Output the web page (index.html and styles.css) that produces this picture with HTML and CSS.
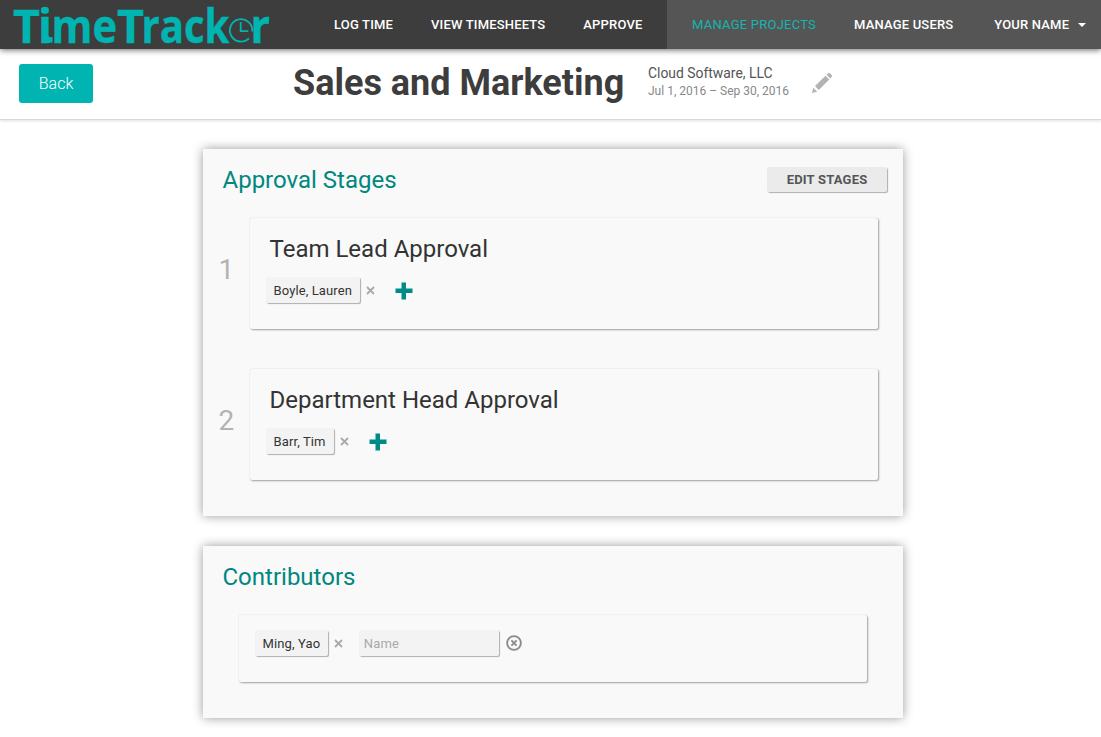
FILE: index.html
```html
<!DOCTYPE html>
<html lang="en">
<head>
<meta charset="utf-8">
<title>TimeTracker</title>
<link rel="stylesheet" href="styles.css">
</head>
<body>
<header class="navbar">
  <a class="logo" aria-label="TimeTracker">
    <svg width="290" height="49" viewBox="0 0 290 49">
      <g class="logo-text">
        <text x="13" y="42.7" textLength="27" lengthAdjust="spacingAndGlyphs">T</text>
        <text x="38" y="42.7" textLength="14" lengthAdjust="spacingAndGlyphs">i</text>
        <text x="51.5" y="42.7" textLength="65.500" lengthAdjust="spacingAndGlyphs">me</text>
        <text x="117" y="42.7" textLength="27" lengthAdjust="spacingAndGlyphs">T</text>
        <text x="141.5" y="42.7" textLength="88" lengthAdjust="spacingAndGlyphs">rack</text>
        <text x="250.5" y="42.7" textLength="19.500" lengthAdjust="spacingAndGlyphs">r</text>
      </g>
      <path class="logo-foot" d="M47 33q1 5 5.500 4v5.500q-4 .8-8 .2z"/>
      <path class="logo-clock" d="M240.700 22v9.200h7.600M249 38.300A11.200 11.200 0 1 1 252.200 31.500"/>
    </svg>
  </a>
  <nav class="nav">
    <a class="nav-link">LOG TIME</a>
    <a class="nav-link">VIEW TIMESHEETS</a>
    <a class="nav-link">APPROVE</a>
  </nav>
  <nav class="nav nav-admin">
    <a class="nav-link active">MANAGE PROJECTS</a>
    <a class="nav-link">MANAGE USERS</a>
    <a class="nav-link user">YOUR NAME<span class="caret"></span></a>
  </nav>
</header>
<section class="project-bar">
  <button class="back">Back</button>
  <h1>Sales and Marketing</h1>
  <div class="meta">
    <div class="client">Cloud Software, LLC</div>
    <div class="dates">Jul 1, 2016 – Sep 30, 2016</div>
  </div>
  <svg class="pencil" width="22" height="22" viewBox="0 0 22 22"><path d="M1 21l1.200-5.200 4 4zM4 14L14.500 3.800l3.800 3.700L7.800 18zM15.600 2.700L17.200 1.200q.8-.7 1.600 0l2 2q.8.800 0 1.600l-1.500 1.600z"/></svg>
</section>
<main>
  <section class="panel">
    <div class="panel-head">
      <h2>Approval Stages</h2>
      <button class="edit">EDIT STAGES</button>
    </div>
    <div class="stage">
      <span class="number">1</span>
      <div class="card">
        <h3>Team Lead Approval</h3>
        <div class="people">
          <span class="chip">Boyle, Lauren</span>
          <svg class="remove" width="9" height="9" viewBox="0 0 9 9"><path d="M1 1l7 7M8 1L1 8"/></svg>
          <svg class="add" width="18" height="18" viewBox="0 0 18 18"><path d="M6.500 .5h4.500V6.500h6.500v4.500H11v6.500H6.500V11H.5V6.500h6z"/></svg>
        </div>
      </div>
    </div>
    <div class="stage">
      <span class="number">2</span>
      <div class="card">
        <h3>Department Head Approval</h3>
        <div class="people">
          <span class="chip">Barr, Tim</span>
          <svg class="remove" width="9" height="9" viewBox="0 0 9 9"><path d="M1 1l7 7M8 1L1 8"/></svg>
          <svg class="add" width="18" height="18" viewBox="0 0 18 18"><path d="M6.500 .5h4.500V6.500h6.500v4.500H11v6.500H6.500V11H.5V6.500h6z"/></svg>
        </div>
      </div>
    </div>
  </section>
  <section class="panel">
    <div class="panel-head">
      <h2>Contributors</h2>
    </div>
    <div class="card contributors">
      <div class="people">
        <span class="chip">Ming, Yao</span>
        <svg class="remove" width="9" height="9" viewBox="0 0 9 9"><path d="M1 1l7 7M8 1L1 8"/></svg>
        <input class="name-input" type="text" placeholder="Name">
        <svg class="cancel" width="16" height="16" viewBox="0 0 16 16"><circle cx="8" cy="8" r="6.900"/><path d="M5.400 5.400l5.200 5.200M10.600 5.400l-5.200 5.200"/></svg>
      </div>
    </div>
  </section>
</main>
</body>
</html>
```
FILE: styles.css
```css
* { box-sizing: border-box; }
body { margin: 0; background: #fff; color: #333; font-family: Roboto, sans-serif; font-size: 13px; height: 737px; overflow: hidden; }
h1, h2, h3 { margin: 0; }
svg { display: block; flex: none; }
button, input { font-family: inherit; border: 0; }
.navbar { position: relative; display: flex; height: 49px; background: #3d3d3d; box-shadow: 0 1px 6px rgba(0, 0, 0, .6); }
.logo { width: 308px; }
.logo-text { font: bold 46px "Open Sans", sans-serif; fill: #00b5b1; stroke: #00b5b1; stroke-width: .4; }
.logo-clock { fill: none; stroke: #00b5b1; stroke-width: 1.800; }
.logo-foot { fill: #00b5b1; }
.nav { display: flex; width: 359px; padding-left: 26px; }
.nav-admin { flex: 1; width: auto; padding-left: 25px; background: #555; }
.nav-link { margin-right: 37.900px; line-height: 49px; font-weight: 500; letter-spacing: .18px; color: #fff; white-space: nowrap; }
.nav-link.active { margin-right: 38px; letter-spacing: .23px; color: #13b5b1; font-weight: 400; }
.nav-link.user { display: flex; align-items: center; margin-right: 0; margin-left: 3px; }
.caret { margin-left: 9px; border: 4px solid transparent; border-top-color: #fff; border-bottom: 0; }
.project-bar { display: flex; height: 71px; padding-left: 19px; border-bottom: 1px solid #d8d8d8; box-shadow: 0 1px 3px rgba(0, 0, 0, .12); }
.back { width: 74px; height: 39px; margin-top: 15px; padding: 0; border-radius: 3px; background: #00b5b1; color: #fff; font-size: 16px; font-weight: 300; }
h1 { width: 355px; margin-left: 200px; padding-top: 13px; font-size: 36px; line-height: 42px; font-weight: 700; color: #3d3d3d; white-space: nowrap; }
.meta { width: 163px; padding-top: 16px; white-space: nowrap; }
.client { height: 18px; font-size: 13.900px; line-height: 17px; color: #555; }
.dates { font-size: 12px; line-height: 17px; color: #888; }
.pencil { margin-top: 23px; fill: #b3b3b3; }
main { display: flex; flex-direction: column; gap: 30px; width: 700px; margin: 29px 0 0 203px; }
.panel { height: 367px; background: #f9f9f9; box-shadow: 0 0 10px rgba(0, 0, 0, .4); }
.panel + .panel { height: 172px; }
.panel-head { display: flex; justify-content: space-between; height: 69px; padding: 17px 15px 0 19.500px; }
h2, h3 { font-size: 24px; line-height: 28px; font-weight: 400; }
h2 { color: #00877f; }
.edit { width: 120px; height: 25px; margin-top: 1px; margin-right: 1px; padding: 0; border-radius: 2px; background: #ebebeb; color: #555; font-size: 13px; font-weight: 700; letter-spacing: .2px; box-shadow: 1px 1px 1px rgba(0, 0, 0, .3); }
.stage { display: flex; align-items: flex-start; height: 151px; }
.number { width: 47px; padding: 34px 0 0 15.500px; font-size: 28px; line-height: 36px; color: #b3b3b3; }
.card { width: 628px; height: 111px; padding: 17px 19.500px; border-radius: 2px; box-shadow: 0 0 1px rgba(0, 0, 0, .2), 1px 1px 2px rgba(0, 0, 0, .35); }
.people { display: flex; align-items: center; margin: 14px 0 0 -3.500px; }
.chip { height: 26px; padding: 0 8px 0 7.500px; border-radius: 2px; background: #f3f3f3; line-height: 27px; letter-spacing: .12px; box-shadow: 1px 1px 1px rgba(0, 0, 0, .3); white-space: nowrap; }
.remove { margin: 1px 0 0 6px; fill: none; stroke: #aaa; stroke-width: 1.800; }
.add { margin: 1px 0 0 20px; fill: #008c86; }
.contributors { height: 67px; margin-left: 36px; padding: 15px 16px; }
.contributors .people { margin: 0; }
.name-input { width: 140px; height: 26px; margin-left: 15.500px; padding: 1px 5px 0; border-radius: 2px; background: #f3f3f3; font-size: 13px; letter-spacing: .2px; box-shadow: 1px 1px 1px rgba(0, 0, 0, .3); }
.name-input::placeholder { color: #aaa; }
.cancel { margin-left: 7px; fill: none; stroke: #8c8c8c; stroke-width: 1.900; }
```
